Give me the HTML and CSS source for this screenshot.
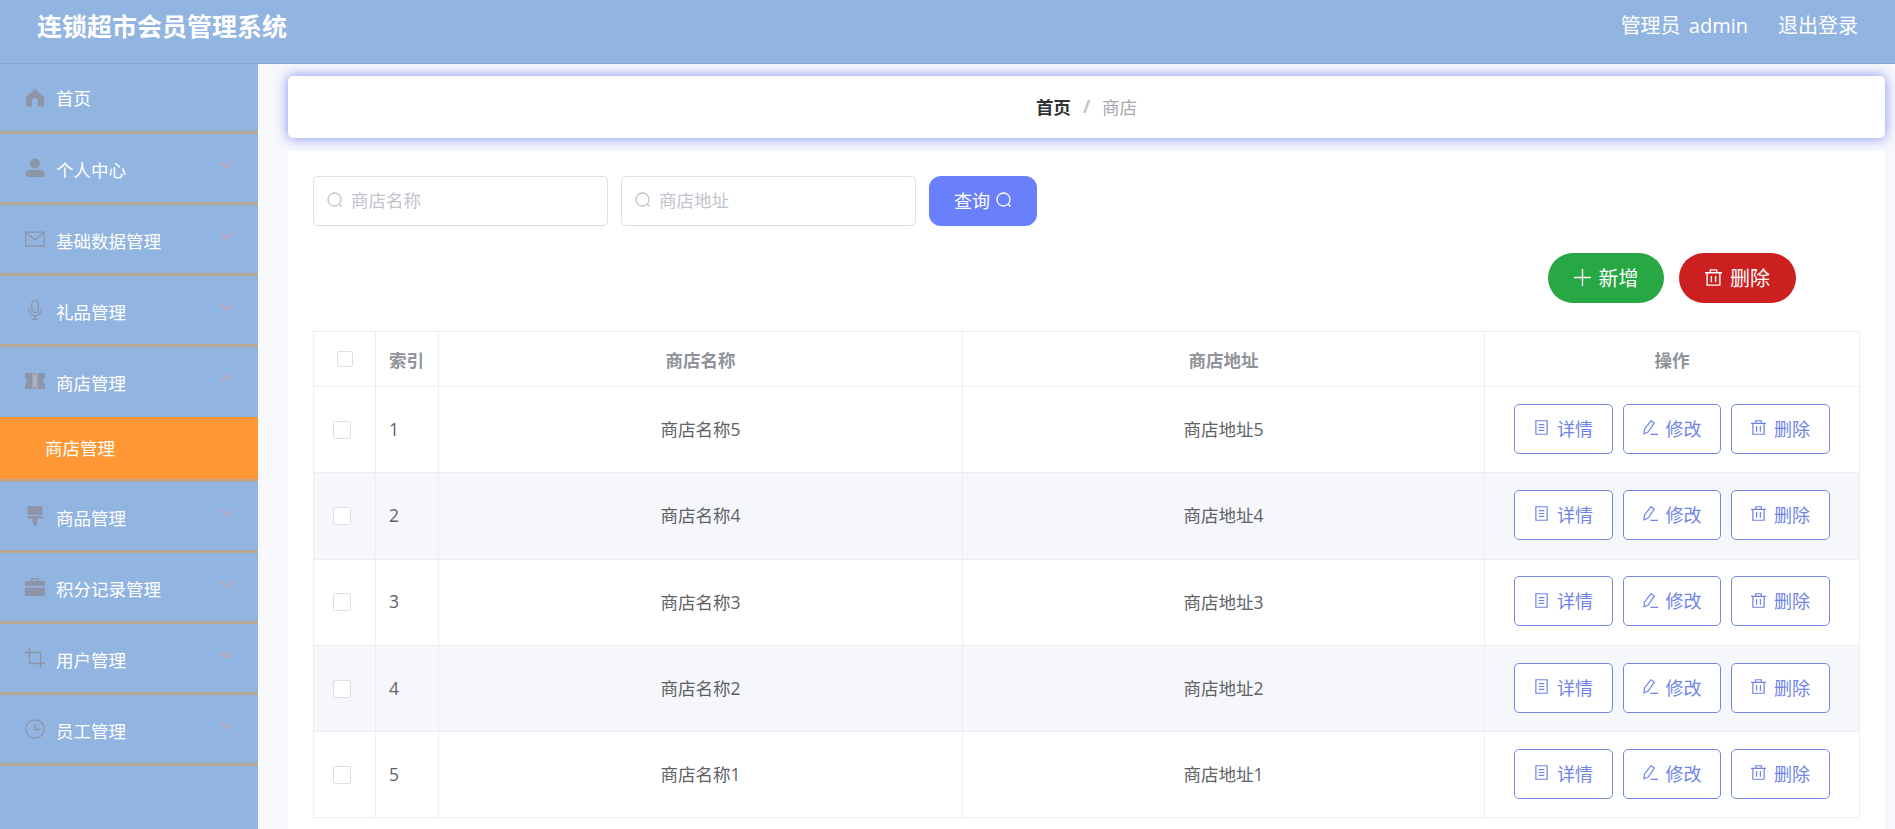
FILE: index.html
```html
<!DOCTYPE html>
<html lang="zh">
<head>
<meta charset="utf-8">
<title>连锁超市会员管理系统</title>
<link rel="stylesheet" href="styles.css">
</head>
<body>
<svg class="defs" width="0" height="0" aria-hidden="true">
  <symbol id="i-home" viewBox="0 0 20 20"><path fill="currentColor" d="M10 1 1 9v9.500h6V13a3 3 0 0 1 6 0v5.500h6V9z"/></symbol>
  <symbol id="i-user" viewBox="0 0 20 20"><circle fill="currentColor" cx="10" cy="5.500" r="5"/><path fill="currentColor" d="M4 12h12a3.500 3.500 0 0 1 3.500 3.500v1A2.500 2.500 0 0 1 17 19H3A2.500 2.500 0 0 1 .5 16.500v-1A3.500 3.500 0 0 1 4 12z"/></symbol>
  <symbol id="i-mail" viewBox="0 0 20 20"><path fill="none" stroke="currentColor" stroke-width="1.300" d="M.7 3.200h18.600v13.800H.7zM1 3.500l9 7.500 9-7.500"/></symbol>
  <symbol id="i-mic" viewBox="0 0 20 20"><rect fill="none" stroke="currentColor" stroke-width="1.300" x="6.800" y=".7" width="6.400" height="12" rx="3.200"/><path fill="none" stroke="currentColor" stroke-width="1.300" d="M4 9v1a6 6 0 0 0 12 0V9M10 16v3.500M7 19.500h6"/></symbol>
  <symbol id="i-ticket" viewBox="0 0 20 20"><path fill="currentColor" d="M0 2h20v4.500L18 10l2 3.500V18H0v-4.500L2 10 0 6.500z"/><path fill="#a7b0c4" d="M7.500 2h1.200l1.300 3 1.300-3h1.200v16h-1.200L10 15l-1.300 3H7.500z"/></symbol>
  <symbol id="i-brush" viewBox="0 0 20 20"><path fill="currentColor" d="M2.500 0h15v9h-15zM2.500 10h15v2.500h-5V16l-1.500 4H9l-1.500-4v-3.500h-5z"/></symbol>
  <symbol id="i-case" viewBox="0 0 20 20"><path fill="currentColor" d="M7 1h6a1 1 0 0 1 1 1v2h5a1 1 0 0 1 1 1v4H0V5a1 1 0 0 1 1-1h5V2a1 1 0 0 1 1-1zm.500 1.500V4h5V2.500zM0 10.500h20V18a1 1 0 0 1-1 1H1a1 1 0 0 1-1-1z"/></symbol>
  <symbol id="i-crop" viewBox="0 0 20 20"><path fill="none" stroke="currentColor" stroke-width="1.400" d="M4.500 0v15.500H20M0 4.500h15.500V20"/></symbol>
  <symbol id="i-clock" viewBox="0 0 20 20"><circle fill="none" stroke="currentColor" stroke-width="1.300" cx="10" cy="10" r="9.200"/><path fill="none" stroke="currentColor" stroke-width="1.300" d="M10 4.500V10.500H15.500"/></symbol>
  <symbol id="i-down" viewBox="0 0 14 8"><path fill="none" stroke="currentColor" stroke-width="1.600" d="M1 1l6 6 6-6"/></symbol>
  <symbol id="i-up" viewBox="0 0 14 8"><path fill="none" stroke="currentColor" stroke-width="1.600" d="M1 7l6-6 6 6"/></symbol>
  <symbol id="i-search" viewBox="0 0 16 16"><circle fill="none" stroke="currentColor" stroke-width="1.300" cx="7.500" cy="7.500" r="6.500"/><path fill="none" stroke="currentColor" stroke-width="1.300" d="M12 12l2.500 2.500"/></symbol>
  <symbol id="i-plus" viewBox="0 0 16 16"><path fill="none" stroke="currentColor" stroke-width="1.300" d="M8 0v16M0 8h16"/></symbol>
  <symbol id="i-trash" viewBox="0 0 16 16"><path fill="none" stroke="currentColor" stroke-width="1.300" d="M0 3.500h16M5 3.500V.8h6v2.700M2 3.500v11.700h12V3.500M6 6.500v6M10 6.500v6"/></symbol>
  <symbol id="i-doc" viewBox="0 0 16 16"><path fill="none" stroke="currentColor" stroke-width="1.300" d="M2 .8h12v14.400H2zM5 5h6M5 8h6M5 11h6"/></symbol>
  <symbol id="i-edit" viewBox="0 0 16 16"><path fill="none" stroke="currentColor" stroke-width="1.300" d="M8.500.8l3.500 2.500-6.500 9.500-4.500 2 .5-5zM8 15.300h8"/></symbol>
</svg>

<header class="topbar">
  <div class="brand">连锁超市会员管理系统</div>
  <div class="account">
    <span>管理员 admin</span>
    <span>退出登录</span>
  </div>
</header>

<div class="layout">
  <nav class="sidebar">
    <div class="menu-item">
      <div class="menu-title"><svg class="menu-icon"><use href="#i-home"/></svg><span>首页</span></div>
    </div>
    <div class="menu-item">
      <div class="menu-title"><svg class="menu-icon"><use href="#i-user"/></svg><span>个人中心</span><svg class="arrow"><use href="#i-down"/></svg></div>
    </div>
    <div class="menu-item">
      <div class="menu-title"><svg class="menu-icon"><use href="#i-mail"/></svg><span>基础数据管理</span><svg class="arrow"><use href="#i-down"/></svg></div>
    </div>
    <div class="menu-item">
      <div class="menu-title"><svg class="menu-icon"><use href="#i-mic"/></svg><span>礼品管理</span><svg class="arrow"><use href="#i-down"/></svg></div>
    </div>
    <div class="menu-item">
      <div class="menu-title"><svg class="menu-icon"><use href="#i-ticket"/></svg><span>商店管理</span><svg class="arrow"><use href="#i-up"/></svg></div>
      <div class="submenu-item">商店管理</div>
    </div>
    <div class="menu-item">
      <div class="menu-title"><svg class="menu-icon"><use href="#i-brush"/></svg><span>商品管理</span><svg class="arrow"><use href="#i-down"/></svg></div>
    </div>
    <div class="menu-item">
      <div class="menu-title"><svg class="menu-icon"><use href="#i-case"/></svg><span>积分记录管理</span><svg class="arrow"><use href="#i-down"/></svg></div>
    </div>
    <div class="menu-item">
      <div class="menu-title"><svg class="menu-icon"><use href="#i-crop"/></svg><span>用户管理</span><svg class="arrow"><use href="#i-down"/></svg></div>
    </div>
    <div class="menu-item">
      <div class="menu-title"><svg class="menu-icon"><use href="#i-clock"/></svg><span>员工管理</span><svg class="arrow"><use href="#i-down"/></svg></div>
    </div>
  </nav>

  <main class="main">
    <div class="crumbs">
      <strong>首页</strong><span class="crumb-sep">/</span><span class="crumb-now">商店</span>
    </div>
    <section class="card">
      <div class="search-row">
        <label class="field"><svg class="field-icon"><use href="#i-search"/></svg><span>商店名称</span></label>
        <label class="field"><svg class="field-icon"><use href="#i-search"/></svg><span>商店地址</span></label>
        <button class="btn-query">查询<svg class="btn-query-icon"><use href="#i-search"/></svg></button>
      </div>
      <div class="action-row">
        <button class="pill pill-green"><svg class="pill-icon"><use href="#i-plus"/></svg>新增</button>
        <button class="pill pill-red"><svg class="pill-icon"><use href="#i-trash"/></svg>删除</button>
      </div>
      <table class="grid">
        <colgroup><col class="c-check"><col class="c-index"><col class="c-name"><col class="c-addr"><col class="c-ops"></colgroup>
        <thead>
          <tr><th><i class="check check-head"></i></th><th class="left">索引</th><th>商店名称</th><th>商店地址</th><th>操作</th></tr>
        </thead>
        <tbody>
          <tr><td><i class="check"></i></td><td class="left">1</td><td>商店名称5</td><td>商店地址5</td><td><div class="ops"><button class="op"><svg class="op-icon"><use href="#i-doc"/></svg>详情</button><button class="op"><svg class="op-icon"><use href="#i-edit"/></svg>修改</button><button class="op"><svg class="op-icon"><use href="#i-trash"/></svg>删除</button></div></td></tr>
          <tr><td><i class="check"></i></td><td class="left">2</td><td>商店名称4</td><td>商店地址4</td><td><div class="ops"><button class="op"><svg class="op-icon"><use href="#i-doc"/></svg>详情</button><button class="op"><svg class="op-icon"><use href="#i-edit"/></svg>修改</button><button class="op"><svg class="op-icon"><use href="#i-trash"/></svg>删除</button></div></td></tr>
          <tr><td><i class="check"></i></td><td class="left">3</td><td>商店名称3</td><td>商店地址3</td><td><div class="ops"><button class="op"><svg class="op-icon"><use href="#i-doc"/></svg>详情</button><button class="op"><svg class="op-icon"><use href="#i-edit"/></svg>修改</button><button class="op"><svg class="op-icon"><use href="#i-trash"/></svg>删除</button></div></td></tr>
          <tr><td><i class="check"></i></td><td class="left">4</td><td>商店名称2</td><td>商店地址2</td><td><div class="ops"><button class="op"><svg class="op-icon"><use href="#i-doc"/></svg>详情</button><button class="op"><svg class="op-icon"><use href="#i-edit"/></svg>修改</button><button class="op"><svg class="op-icon"><use href="#i-trash"/></svg>删除</button></div></td></tr>
          <tr><td><i class="check"></i></td><td class="left">5</td><td>商店名称1</td><td>商店地址1</td><td><div class="ops"><button class="op"><svg class="op-icon"><use href="#i-doc"/></svg>详情</button><button class="op"><svg class="op-icon"><use href="#i-edit"/></svg>修改</button><button class="op"><svg class="op-icon"><use href="#i-trash"/></svg>删除</button></div></td></tr>
        </tbody>
      </table>
    </section>
  </main>
</div>
</body>
</html>
```

FILE: styles.css
```css
* { box-sizing: border-box; }
html, body { height: 100%; }
body {
  margin: 0;
  overflow: hidden;
  display: flex;
  flex-direction: column;
  background: #f7f8fb;
  color: #606266;
  font-family: "Open Sans", "Noto Sans CJK SC", sans-serif;
  font-size: 17.500px;
}
.defs { position: absolute; }
button { font: inherit; cursor: pointer; }

.topbar {
  flex: 0 0 64px;
  display: flex;
  align-items: flex-start;
  justify-content: space-between;
  padding: 0 37px 0 37px;
  background: #92b4e1;
  border-bottom: 1px solid #86a6d2;
  color: #fff;
}
.brand { font-size: 25px; font-weight: 700; line-height: 53px; }
.account { display: flex; gap: 30px; line-height: 52px; font-size: 20px; word-spacing: 3px; }

.layout { flex: 1; display: flex; min-height: 0; }
.sidebar { flex: 0 0 258px; background: #92b4e1; }
.menu-item { border-bottom: 3px solid #b9a594; }
.menu-title {
  height: 68px;
  display: flex;
  align-items: center;
  padding: 0 25px;
  color: #fff;
}
.menu-title span { padding-top: 2px; }
.menu-item:first-child .menu-title { height: 67px; }
.menu-item:first-child .menu-title span { padding-top: 0; }
.menu-icon { width: 20px; height: 20px; margin-right: 11px; color: #8d96a8; flex: none; }
.arrow { width: 13px; height: 8px; margin: -6px 0 0 auto; color: #c9a3aa; flex: none; }
.submenu-item {
  height: 62px;
  padding-left: 45px;
  line-height: 62px;
  margin-top: 2px;
  background: #ff9734;
  color: #fff;
}

.main { flex: 1; min-width: 0; padding: 12px 10px 0 30px; overflow: hidden; }
.crumbs {
  height: 62px;
  display: flex;
  align-items: center;
  justify-content: center;
  padding-bottom: 2px;
  background: #fff;
  border-radius: 5px;
  box-shadow: 0 0 12px 1px rgba(90, 105, 245, .65);
  color: #303133;
  font-size: 17.500px;
}
.crumbs strong { color: #303133; font-weight: 700; }
.crumb-sep { margin: 0 12px; color: #c0c4cc; font-weight: 700; }
.crumb-now { color: #a6a9ad; }

.card { margin-top: 13px; padding: 25px; background: #fff; }
.search-row { display: flex; gap: 13px; }
.field {
  width: 295px;
  height: 50px;
  display: flex;
  align-items: center;
  padding-left: 13px;
  padding-bottom: 3px;
  background: #fff;
  border: 1px solid #dcdfe6;
  border-radius: 5px;
  color: #c0c4cc;
}
.field-icon { width: 16px; height: 16px; margin-right: 8px; }
.btn-query {
  width: 108px;
  height: 50px;
  display: flex;
  align-items: center;
  justify-content: center;
  gap: 6px;
  padding: 0 0 3px;
  background: #6a7ffb;
  border: 0;
  border-radius: 12px;
  color: #fff;
  font-size: 18px;
}
.btn-query-icon { width: 16px; height: 16px; }

.action-row {
  display: flex;
  justify-content: flex-end;
  gap: 15px;
  margin-top: 27px;
  padding-right: 64px;
}
.pill {
  width: 117px;
  height: 50px;
  display: flex;
  align-items: center;
  justify-content: center;
  gap: 8px;
  padding: 0 0 2px;
  border: 0;
  border-radius: 25px;
  color: #fff;
  font-size: 20px;
}
.pill-green { background: #28a745; width: 116px; }
.pill-red { background: #cc1f1f; }
.pill-icon { width: 17px; height: 17px; }

.grid {
  width: 1546px;
  margin-top: 28px;
  table-layout: fixed;
  border-collapse: collapse;
  background: #fff;
}
.c-check { width: 62px; }
.c-index { width: 63px; }
.c-name { width: 524px; }
.c-addr { width: 522px; }
.c-ops { width: 375px; }
.grid th, .grid td {
  border: 1px solid #ebeef5;
  padding: 0;
  text-align: center;
}
.grid th { height: 55px; color: #909399; font-weight: 700; font-size: 17.500px; }
.grid td { height: 86.300px; padding-bottom: 2px; color: #606266; }
.grid .left { text-align: left; padding-left: 13px; }
.grid tbody tr:nth-child(even) td { background: #f5f7fa; }

.check {
  display: block;
  width: 18px;
  height: 18px;
  margin: 2px 0 0 19px;
  background: #fff;
  border: 1px solid #dcdfe6;
  border-radius: 2px;
}
.check-head { width: 16px; height: 16px; margin: 0 0 0 23px; }

.ops { display: flex; gap: 10px; padding-left: 29px; }
.op {
  width: 99px;
  height: 50px;
  display: flex;
  align-items: center;
  justify-content: center;
  gap: 8px;
  padding: 0 0 2px;
  background: #fff;
  border: 1px solid #7688dd;
  border-radius: 5px;
  color: #7083e8;
  font-size: 18px;
}
.op:nth-child(2) { width: 98px; }
.op-icon { width: 15px; height: 15px; }
```
